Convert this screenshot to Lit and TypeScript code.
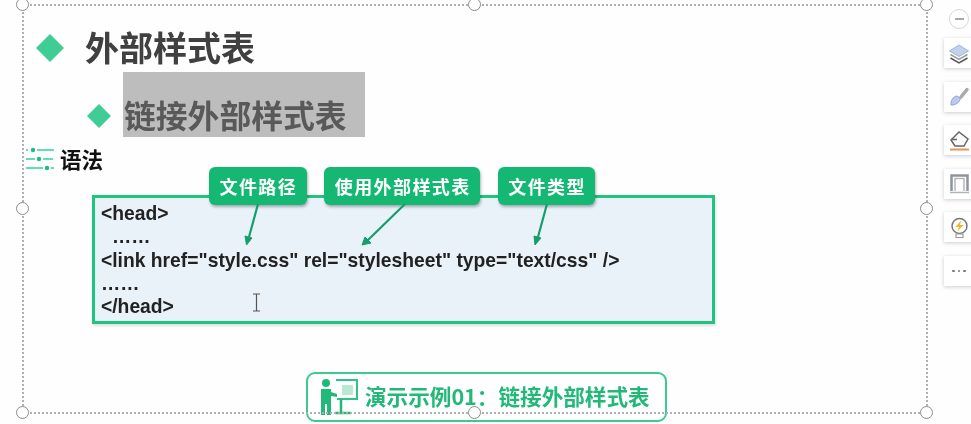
import { LitElement, html, css, svg } from "lit";
import { customElement } from "lit/decorators.js";

const HANDLES = [
  ["0", "0"], ["50%", "0"], ["100%", "0"],
  ["0", "50%"], ["100%", "50%"],
  ["0", "100%"], ["50%", "100%"], ["100%", "100%"],
];

const ICONS = [
  svg`<path d="M10 2 19.500 8 10 13.500 .5 8Z" fill="#c3d2ec" stroke="#9db4dd" stroke-width="1"/>
      <path d="M1.500 11.500 10 16.500 18.500 11.500" fill="none" stroke="#8fa39a" stroke-width="1.500"/>
      <path d="M1.500 15 10 20 18.500 15" fill="none" stroke="#555" stroke-width="1.500"/>`,
  svg`<path d="M12 11 18 3.500" stroke="#a9a9a9" stroke-width="3.500" stroke-linecap="round" fill="none"/>
      <path d="M2 19C1.500 15 4 10.500 8 10L11.500 12.500C10.500 16.500 6 19.500 2 19Z" fill="#bccbec" stroke="#8aa3dc" stroke-width="1"/>`,
  svg`<path d="M10 2 19 9 15 16H6L2 10Z" fill="#fafafa" stroke="#666" stroke-width="1.500"/>
      <path d="M2 9.500H8" stroke="#666" stroke-width="1.500"/>
      <path d="M1 19.500H20" stroke="#e8935a" stroke-width="2"/>`,
  svg`<path d="M2.500 18V2.500H18.500V18" fill="none" stroke="#8f959c" stroke-width="2.500"/>
      <path d="M6 18V5.500H15V18" fill="none" stroke="#b4b8bd" stroke-width="1.500"/>
      <path d="M1 19.500H20" stroke="#a9b5c4" stroke-width="1.500"/>`,
  svg`<circle cx="10.500" cy="9" r="7.500" fill="#fff" stroke="#777" stroke-width="1.500"/>
      <path d="M7 17H14V20.500H7Z" fill="#fff" stroke="#999" stroke-width="1.200"/>
      <path d="M12 3.500 6.500 10H10L8.500 14.500 14.500 8H11Z" fill="#f0b62c"/>`,
];

@customElement("app-root")
export class AppRoot extends LitElement {
  static styles = css`
    :host { display: block; width: 971px; height: 424px; overflow: hidden; background: #fff; }
    .root {
      display: flex; align-items: flex-start; width: 971px; height: 424px; overflow: hidden;
      background: #fefefe; filter: blur(0.45px);
      font-family: "Noto Sans CJK SC", "Liberation Sans", sans-serif;
    }
    .slide { position: relative; flex: none; display: flex; flex-direction: column;
      width: 904px; height: 408px; margin: 5px 0 0 23px; }
    .slide > * { flex: none; }
    .frame { position: absolute; inset: 0; border: 2px dotted #b0b0b0; margin: -1px;
      pointer-events: none; z-index: 3; }
    .handle { position: absolute; width: 11px; height: 11px; margin: -7px 0 0 -7px;
      border: 1.500px solid #8c8c8c; border-radius: 50%; background: #fff; z-index: 4; }

    .h1 { display: flex; align-items: center; height: 40px; margin-top: 23px; padding-left: 13px; gap: 21px; }
    .d1 { width: 28px; height: 28px; background: #3fcc95; clip-path: polygon(50% 0, 100% 50%, 50% 100%, 0 50%); }
    .h1 span { font-size: 34px; line-height: 40px; font-weight: 700; color: #404040; margin-bottom: 2px; }

    .h2 { display: flex; align-items: flex-end; height: 65px; margin-top: 4px; padding-left: 64px; gap: 12px; }
    .d2 { width: 24px; height: 24px; margin-bottom: 9px; background: #3fcc95; clip-path: polygon(50% 0, 100% 50%, 50% 100%, 0 50%); }
    .mark { display: flex; align-items: flex-end; width: 242px; height: 65px; background: #bdbdbd; box-sizing: border-box; padding-left: 1px; }
    .mark span { font-size: 31.800px; line-height: 40px; font-weight: 700; color: #595959; margin-bottom: 3px; }

    .syntax { display: flex; align-items: center; height: 26px; margin-top: 10px; padding-left: 2px; gap: 5px; }
    .syntax svg { display: block; margin-top: -2px; }
    .syntax span { font-size: 21.500px; line-height: 26px; font-weight: 700; color: #111; margin-bottom: 2px; }

    .tags { position: relative; z-index: 1; display: flex; gap: 17.700px; height: 38px; margin: -6px 0 -10px 186px; }
    .tag { display: flex; align-items: center; justify-content: center; padding: 0 9.500px 0 10.500px; height: 38px; border-radius: 6px;
      background: #14b873; color: #fff; font-size: 18px; font-weight: 700; letter-spacing: 1.400px;
      box-shadow: 1px 2px 3px rgba(0,0,0,.3); white-space: nowrap; }

    .code { position: relative; box-sizing: border-box; width: 623px; height: 129px; margin-left: 69px;
      padding: 4px 0 0 6px; border: 3px solid #1fc47f; background: #e9f1f9;
      box-shadow: 1px 2px 2px rgba(0,0,0,.12);
      font-family: "Liberation Sans", Arial, sans-serif; font-size: 19.300px; font-weight: 700; line-height: 23.250px; color: #222; }
    .line { white-space: pre; }
    .indent { padding-left: 11px; }
    .arrows { position: absolute; left: -3px; top: -3px; z-index: 2; overflow: visible; }
    .cursor { position: absolute; left: 157px; top: 95px; }

    .demo { display: flex; align-items: center; box-sizing: border-box; width: 361px; height: 50px;
      margin: 48px 0 0 283px; padding-left: 12px; gap: 7px; border: 2.500px solid #3bcb8f; border-radius: 9px; background: #fff; }
    .demo span { font-size: 21.600px; font-weight: 700; line-height: 30px; color: #21b878; white-space: nowrap; margin-bottom: 2px; }

    .tools { flex: none; display: flex; flex-direction: column; align-items: flex-start; margin-left: 17px; gap: 13.600px; }
    .minus { box-sizing: border-box; width: 20px; height: 20px; margin: 9px 0 -4.600px 5px; border: 1.500px solid #d8d8d8; border-radius: 50%;
      display: flex; align-items: center; justify-content: center; background: #fff; }
    .minus i { width: 9px; height: 2px; background: #aaa; display: block; }
    .btn { box-sizing: border-box; width: 40px; height: 30px; padding-left: 5px; background: #fff; display: flex; align-items: center;
      box-shadow: 0 1px 4px rgba(0,0,0,.2); }
    .dots { display: flex; gap: 3px; padding-left: 3px; }
    .dots i { display: block; width: 2.500px; height: 2.500px; border-radius: 50%; background: #777; }
  `;

  render() {
    return html`
      <div class="root">
        <div class="slide">
          <div class="frame"></div>
          ${HANDLES.map(([l, t]) => html`<div class="handle" style="left:${l};top:${t}"></div>`)}

          <div class="h1"><div class="d1"></div><span>外部样式表</span></div>
          <div class="h2"><div class="d2"></div><div class="mark"><span>链接外部样式表</span></div></div>
          <div class="syntax">
            <svg width="30" height="24" viewBox="0 0 30 24" fill="none" stroke="#2fd39a" stroke-width="1.500">
              <path d="M1 3H3M12 3H29M1 12H10M18 12H28M1 21H18M26 21H29"/>
              <circle cx="8" cy="3" r="2.200" fill="#1fb98a" stroke="none"/>
              <circle cx="14" cy="12" r="2.200" fill="#1fb98a" stroke="none"/>
              <circle cx="22" cy="21" r="2.200" fill="#1fb98a" stroke="none"/>
            </svg>
            <span>语法</span>
          </div>
          <div class="tags">
            <div class="tag">文件路径</div>
            <div class="tag">使用外部样式表</div>
            <div class="tag">文件类型</div>
          </div>
          <div class="code">
            <div class="line">&lt;head&gt;</div>
            <div class="line indent">……</div>
            <div class="line">&lt;link href="style.css" rel="stylesheet" type="text/css" /&gt;</div>
            <div class="line">……</div>
            <div class="line">&lt;/head&gt;</div>
            <svg class="arrows" width="623" height="129" viewBox="0 0 623 129">
              <g stroke="#149e6e" stroke-width="2.200" fill="#149e6e">
                <path d="M166 9 157 42"/><path d="M154.500 50 153 41 160 43Z" stroke-width="1"/>
                <path d="M313 9 276 45"/><path d="M270 50 273 42 279 48Z" stroke-width="1"/>
                <path d="M455 9 446 42"/><path d="M443 50 442 41 449 43Z" stroke-width="1"/>
              </g>
            </svg>
            <svg class="cursor" width="9" height="19" viewBox="0 0 9 19" fill="none" stroke="#555" stroke-width="1.200">
              <path d="M1 1H8M4.500 1V18M1 18H8"/>
            </svg>
          </div>
          <div class="demo">
            <svg width="38" height="38" viewBox="0 0 38 38" fill="none">
              <circle cx="6" cy="5" r="4" fill="#1fb978"/>
              <path d="M1 11H11V14L17 16V19L11 18V37H7V26H5V37H1Z" fill="#1fb978"/>
              <path d="M16 2H37V21H17" stroke="#2fc487" stroke-width="2"/>
              <rect x="22" y="7" width="11" height="10" fill="#b9e9d3"/>
              <path d="M21 21V34M15 35H31" stroke="#1fb978" stroke-width="2.500"/>
            </svg>
            <span>演示示例01：链接外部样式表</span>
          </div>
        </div>

        <div class="tools">
          <div class="minus"><i></i></div>
          ${ICONS.map((icon) => html`<div class="btn"><svg width="21" height="21" viewBox="0 0 21 21">${icon}</svg></div>`)}
          <div class="btn"><div class="dots"><i></i><i></i><i></i></div></div>
        </div>
      </div>
    `;
  }
}
